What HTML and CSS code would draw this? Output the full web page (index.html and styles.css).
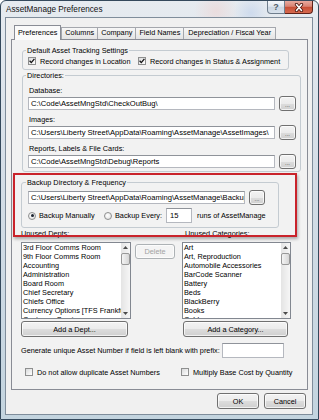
FILE: index.html
```html
<!DOCTYPE html>
<html lang="en">
<head>
  <meta charset="UTF-8">
  <meta name="viewport" content="width=device-width, initial-scale=1.0">
  <title>AssetManage Preferences</title>
  <link rel="stylesheet" href="styles.css">
</head>
<body>
  <div class="window">
    <div class="titlebar">
      <span class="title">AssetManage Preferences</span>
      <div class="caption">
        <span class="cap help">?</span>
        <span class="cap close">
          <svg width="12" height="9" viewBox="0 0 12 9">
            <path d="M3.5 1.5 L8.5 7.5 M8.5 1.5 L3.5 7.5" stroke="#4a1710" stroke-width="3.2" stroke-linecap="round"/>
            <path d="M3.5 1.5 L8.5 7.5 M8.5 1.5 L3.5 7.5" stroke="#fff" stroke-width="1.6" stroke-linecap="round"/>
          </svg>
        </span>
      </div>
    </div>

    <div class="client">
      <div class="tabs">
        <span class="tab active">Preferences</span>
        <span class="tab">Columns</span>
        <span class="tab">Company</span>
        <span class="tab">Field Names</span>
        <span class="tab last">Depreciation / Fiscal Year</span>
      </div>

      <div class="panel">
        <fieldset class="group group-tracking">
          <legend>Default Asset Tracking Settings</legend>
          <div class="check-row">
            <label class="check check-location">
              <span class="box"><svg width="6" height="6" viewBox="0 0 6 6"><path d="M0.6 2.8 L2.3 4.6 L5.4 0.8" fill="none" stroke="#111" stroke-width="1.3"/></svg></span>
              Record changes in Location
            </label>
            <label class="check">
              <span class="box"><svg width="6" height="6" viewBox="0 0 6 6"><path d="M0.6 2.8 L2.3 4.6 L5.4 0.8" fill="none" stroke="#111" stroke-width="1.3"/></svg></span>
              Record changes in Status &amp; Assignment
            </label>
          </div>
        </fieldset>

        <fieldset class="group group-dirs">
          <legend>Directories:</legend>
          <div class="field-label first">Database:</div>
          <div class="path-row">
            <span class="textbox path">C:\Code\AssetMngStd\CheckOutBug\</span>
            <span class="btn dots">...</span>
          </div>
          <div class="field-label">Images:</div>
          <div class="path-row">
            <span class="textbox path">C:\Users\Liberty Street\AppData\Roaming\AssetManage\AssetImages\</span>
            <span class="btn dots">...</span>
          </div>
          <div class="field-label">Reports, Labels &amp; File Cards:</div>
          <div class="path-row">
            <span class="textbox path">C:\Code\AssetMngStd\Debug\Reports</span>
            <span class="btn dots">...</span>
          </div>
        </fieldset>

        <fieldset class="group group-backup">
          <legend>Backup Directory &amp; Frequency</legend>
          <div class="path-row">
            <span class="textbox backup-path">C:\Users\Liberty Street\AppData\Roaming\AssetManage\Backup\</span>
            <span class="btn dots small">...</span>
          </div>
          <div class="radio-row">
            <label class="option manual"><span class="radio on"></span>Backup Manually</label>
            <label class="option"><span class="radio"></span>Backup Every:</label>
            <span class="textbox spin">15</span>
            <span class="runs">runs of AssetManage</span>
          </div>
        </fieldset>

        <div class="lists">
          <div class="list-col depts">
            <div class="list-label">Unused Depts:</div>
            <div class="list-line">
              <div class="listbox">
                <div class="items">
                  <div>3rd Floor Comms Room</div>
                  <div>9th Floor Comms Room</div>
                  <div>Accounting</div>
                  <div>Administration</div>
                  <div>Board Room</div>
                  <div>Chief Secretary</div>
                  <div>Chiefs Office</div>
                  <div>Currency Options [TFS Frankfurt]</div>
                  <div>Customer Service</div>
                </div>
                <div class="scrollbar">
                  <span class="arrow"><svg width="5" height="3" viewBox="0 0 5 3"><path d="M0 3 L2.5 0 L5 3 Z" fill="#4b4b4b"/></svg></span>
                  <span class="thumb"></span>
                  <span class="arrow down"><svg width="5" height="3" viewBox="0 0 5 3"><path d="M0 0 L2.5 3 L5 0 Z" fill="#4b4b4b"/></svg></span>
                </div>
              </div>
              <span class="btn delete">Delete</span>
            </div>
            <span class="btn add add-dept">Add a Dept...</span>
          </div>

          <div class="list-col cats">
            <div class="list-label">Unused Categories:</div>
            <div class="listbox">
              <div class="items">
                <div>Art</div>
                <div>Art, Reproduction</div>
                <div>Automobile Accessories</div>
                <div>BarCode Scanner</div>
                <div>Battery</div>
                <div>Beds</div>
                <div>BlackBerry</div>
                <div>Books</div>
                <div>Cables</div>
              </div>
              <div class="scrollbar">
                <span class="arrow"><svg width="5" height="3" viewBox="0 0 5 3"><path d="M0 3 L2.5 0 L5 3 Z" fill="#4b4b4b"/></svg></span>
                <span class="thumb"></span>
                <span class="arrow down"><svg width="5" height="3" viewBox="0 0 5 3"><path d="M0 0 L2.5 3 L5 0 Z" fill="#4b4b4b"/></svg></span>
              </div>
            </div>
            <span class="btn add add-cat">Add a Category...</span>
          </div>
        </div>

        <div class="prefix-row">
          <span>Generate unique Asset Number if field is left blank with prefix:</span>
          <span class="textbox prefix"></span>
        </div>

        <div class="check-row bottom">
          <label class="check check-dupes"><span class="box"></span>Do not allow duplicate Asset Numbers</label>
          <label class="check"><span class="box"></span>Multiply Base Cost by Quantity</label>
        </div>

        <div class="highlight"></div>
      </div>

      <div class="dialog-buttons">
        <span class="btn dialog">OK</span>
        <span class="btn dialog">Cancel</span>
      </div>
    </div>
  </div>
</body>
</html>
```

FILE: styles.css
```css
* {
  box-sizing: border-box;
}

body {
  margin: 0;
  background: #ffffff;
  font-family: "Liberation Sans", Arial, sans-serif;
  font-size: 7.3px;
  color: #000;
}

.window {
  width: 319px;
  height: 420px;
  border: 1px solid #34495c;
  border-radius: 6px 6px 0 0;
  padding: 0 5px 4px 4px;
  display: flex;
  flex-direction: column;
  background:
    radial-gradient(circle at 215px 10px, rgba(236, 214, 214, 0.7), transparent 22px),
    radial-gradient(circle at 250px 12px, rgba(196, 212, 236, 0.7), transparent 18px),
    linear-gradient(#e6ebf0, #d5dee7 40%, #c3d4df);
}

.titlebar {
  height: 16px;
  display: flex;
  align-items: flex-start;
  padding-left: 1px;
}

.title {
  align-self: center;
  font-size: 8.2px;
  color: #111;
}

.caption {
  margin-left: auto;
  display: flex;
}

.cap {
  height: 13px;
  display: flex;
  align-items: center;
  justify-content: center;
}

.help {
  width: 18px;
  border: 1px solid #6f7e8d;
  border-top: none;
  border-radius: 0 0 0 4px;
  background: linear-gradient(#f6f8fb, #dfe6ee 45%, #cbd6e2 50%, #d8e2ec);
  color: #4f5b67;
  font-size: 9px;
  font-weight: bold;
}

.close {
  width: 28px;
  border: 1px solid #5e2219;
  border-top: none;
  border-left: none;
  border-radius: 0 0 4px 0;
  background: linear-gradient(#e8aa9f, #d98373 45%, #c74d35 50%, #d66a4f);
}

.client {
  flex: 1;
  background: #f0f0f0;
  border: 1px solid #7f8d9b;
  padding: 7px 6px 5px 5px;
  display: flex;
  flex-direction: column;
}

/* tabs */
.tabs {
  display: flex;
  height: 15px;
  margin: 0 0 -1px 3px;
}

.tab {
  height: 12px;
  margin-top: 2px;
  padding: 0 3px;
  border: 1px solid #a4a7ad;
  border-bottom: none;
  border-right: none;
  background: linear-gradient(#f7f7f7, #e4e4e4);
  line-height: 10px;
  white-space: nowrap;
}

.tab.last {
  border-right: 1px solid #a4a7ad;
  padding: 0 4px;
}

.tab.active {
  height: 15px;
  margin-top: 0;
  border-color: #898c95;
  border-right: 1px solid #898c95;
  background: #fafafa;
  line-height: 13px;
  position: relative;
  z-index: 1;
}

.panel {
  width: 297px;
  border: 1px solid #898c95;
  background: #f2f2f2;
  position: relative;
  padding-bottom: 12px;
}

/* group boxes */
.group {
  margin: 0;
  padding: 0;
  border: 1px solid #c4cbd1;
  border-radius: 3px;
  min-width: 0;
}

.group legend {
  padding: 0 1px;
  margin-left: -2px;
  line-height: 9px;
}

.group-tracking {
  width: 267px;
  margin: 6px 0 0 10px;
  padding: 1px 5px 3px 5px;
}

.group-dirs {
  width: 279px;
  margin: 1px 0 0 10px;
  padding: 0 3px 2px 5px;
}

.group-backup {
  width: 258px;
  margin: 6px 0 0 9px;
  padding: 3px 3px 4px 6px;
}

.check-row {
  display: flex;
  align-items: center;
  height: 10px;
}

.check {
  display: flex;
  align-items: center;
  gap: 4px;
  white-space: nowrap;
}

.check-location {
  width: 110px;
}

.box {
  width: 8px;
  height: 8px;
  border: 1px solid #8e8f8f;
  background: linear-gradient(135deg, #d9dadb, #ffffff);
  display: flex;
  align-items: center;
  justify-content: center;
  flex-shrink: 0;
}

.field-label {
  line-height: 9px;
  padding-left: 1px;
  margin-top: 4px;
}

.field-label.first {
  margin-top: 6px;
}

.path-row {
  display: flex;
  align-items: center;
  gap: 4px;
  height: 15px;
  margin-top: 1px;
}

.group-backup .path-row {
  margin-top: 0;
}

.textbox {
  height: 13px;
  background: #fff;
  border: 1px solid #b5b8bf;
  border-top-color: #8f939a;
  padding: 0 2px;
  font-size: 7.6px;
  line-height: 11px;
  white-space: nowrap;
  overflow: hidden;
}

.path {
  width: 247px;
}

.backup-path {
  width: 217px;
}

/* buttons */
.btn {
  display: flex;
  align-items: center;
  justify-content: center;
  border: 1px solid #707070;
  border-radius: 3px;
  background: linear-gradient(#f3f3f3, #ebebeb 50%, #dddddd 50%, #cfcfcf);
  box-shadow: inset 0 0 0 1px rgba(255, 255, 255, 0.7);
  white-space: nowrap;
}

.dots {
  width: 17px;
  height: 15px;
  font-size: 6px;
  padding-top: 3px;
  color: #333;
}

.dots.small {
  width: 16px;
}

.radio-row {
  display: flex;
  align-items: center;
  height: 15px;
  margin-top: 3px;
}

.option {
  display: flex;
  align-items: center;
  gap: 3px;
  white-space: nowrap;
}

.option.manual {
  width: 76px;
}

.radio {
  width: 8px;
  height: 8px;
  border-radius: 50%;
  border: 1px solid #8e8f8f;
  background: radial-gradient(circle at 40% 40%, #ffffff, #dcdcdc);
  display: flex;
  align-items: center;
  justify-content: center;
}

.radio.on::after {
  content: "";
  width: 3px;
  height: 3px;
  border-radius: 50%;
  background: #1c2330;
}

.spin {
  width: 26px;
  height: 15px;
  margin-left: 4px;
  line-height: 13px;
  padding-left: 3px;
}

.runs {
  margin-left: 5px;
  white-space: nowrap;
}

/* lists */
.lists {
  display: flex;
  margin: 1px 0 0 9px;
}

.list-col.depts {
  width: 161px;
}

.list-label {
  line-height: 9px;
  margin-bottom: 4px;
  white-space: nowrap;
}

.cats .list-label {
  margin-left: 3px;
}

.list-line {
  display: flex;
  align-items: flex-start;
}

.listbox {
  width: 110px;
  height: 77px;
  border: 1px solid #828790;
  background: #fff;
  display: flex;
}

.cats .listbox {
  width: 109px;
}

.items {
  flex: 1;
  overflow: hidden;
  padding-left: 1px;
}

.items div {
  line-height: 9px;
  white-space: nowrap;
}

.scrollbar {
  width: 9px;
  display: flex;
  flex-direction: column;
  background: linear-gradient(to right, #e4e4e4, #f6f6f6);
}

.arrow {
  height: 9px;
  display: flex;
  align-items: center;
  justify-content: center;
}

.arrow.down {
  margin-top: auto;
}

.thumb {
  height: 12px;
  margin-top: 1px;
  border: 1px solid #989898;
  border-radius: 2px;
  background: linear-gradient(to right, #f4f4f4, #d6d6d6);
}

.delete {
  width: 40px;
  height: 15px;
  margin: 2px 0 0 4px;
  border-color: #adb2b5;
  background: #f4f4f4;
  color: #a2a2a2;
}

.add {
  height: 16px;
  margin-top: 2px;
}

.add-dept {
  width: 107px;
}

.add-cat {
  width: 105px;
  margin-left: 1px;
}

.prefix-row {
  display: flex;
  align-items: center;
  height: 16px;
  margin: 5px 0 0 9px;
  white-space: nowrap;
}

.prefix {
  width: 62px;
  height: 15px;
  margin-left: 2px;
}

.check-row.bottom {
  margin: 9px 0 0 13px;
}

.check-dupes {
  width: 156px;
}

/* annotation box drawn over the backup settings */
.highlight {
  position: absolute;
  left: 1px;
  top: 133px;
  width: 284px;
  height: 64px;
  border: 2px solid #c9232b;
  box-shadow: 1px 2px 3px rgba(0, 0, 0, 0.3);
  pointer-events: none;
}

.dialog-buttons {
  display: flex;
  justify-content: flex-end;
  gap: 5px;
  margin-top: 3px;
}

.dialog {
  width: 42px;
  height: 16px;
}
```
